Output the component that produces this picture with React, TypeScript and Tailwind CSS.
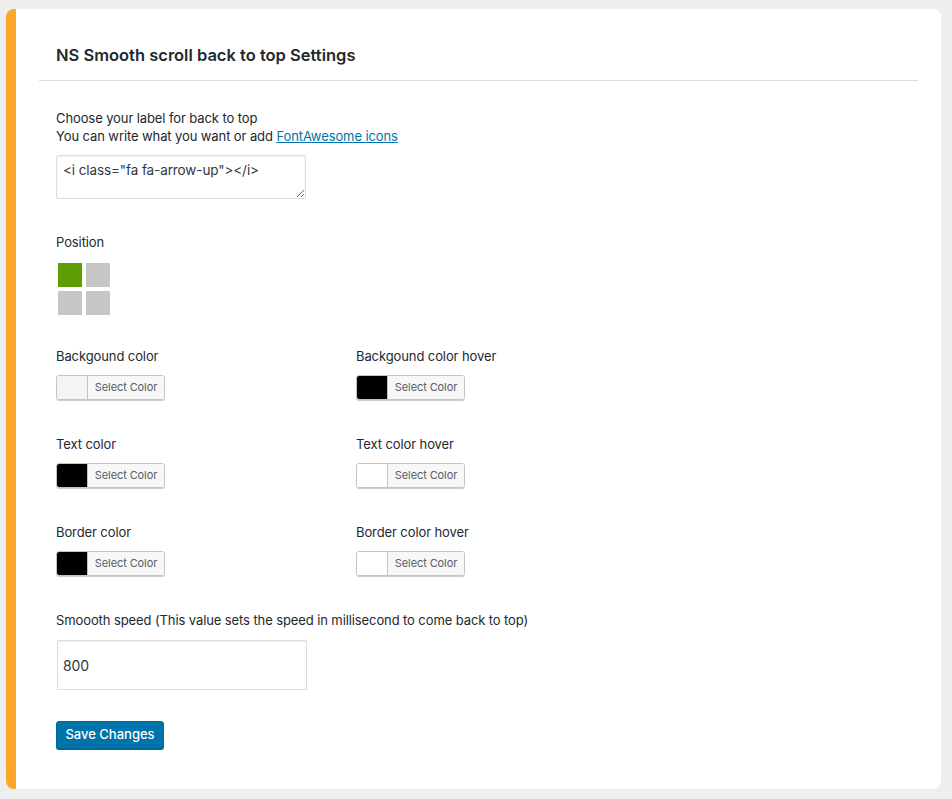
import React from "react";

const font = { fontFamily: "Inter, 'Noto Sans', sans-serif" };

const ColorPicker = ({ swatch }: { swatch: string }) => (
  <div className="flex h-[25px] w-[109px] overflow-hidden rounded-[3px] border border-[#c3c4c7] shadow-[0_1px_0_#ccc]">
    <span className={`w-[31px] border-r border-[#c3c4c7] ${swatch}`} />
    <span className="flex flex-1 items-center justify-center bg-[#f7f7f7] text-[11px] text-[#555d66]">
      Select Color
    </span>
  </div>
);

const Field = ({ label, swatch }: { label: string; swatch: string }) => (
  <div className="w-[300px]">
    <p className="leading-[18px]">{label}</p>
    <div className="mt-[10px]">
      <ColorPicker swatch={swatch} />
    </div>
  </div>
);

const App = () => {
  return (
    <div style={font} className="min-h-[799px] bg-[#eeeeee] pt-[9px] pl-[6px] pr-[11px] pb-[11px] text-[13px] tracking-[-0.1px] text-[#23282d]">
      <div className="rounded-lg border-l-[10px] border-[#fba72a] bg-white px-[23px] pb-[40px]">
        {/* Title */}
        <div className="border-b border-[#dcdcde] px-[17px] pt-[34px] pb-[13px]">
          <h1 className="text-[16.5px] font-semibold leading-6 tracking-normal text-[#23282d]">
            NS Smooth scroll back to top Settings
          </h1>
        </div>

        <div className="px-[17px] pt-[28px]">
          <p className="leading-[18px]">Choose your label for back to top</p>
          <p className="leading-[18px]">
            You can write what you want or add{" "}
            <a href="#" className="text-[#0073aa] underline">FontAwesome icons</a>
          </p>
          <textarea
            defaultValue={'<i class="fa fa-arrow-up"></i>'}
            className="mt-[10px] block h-[44px] w-[250px] rounded-[2px] border border-[#dddddd] px-[6px] py-[4px] text-[13.5px] leading-[20px] text-[#32373c] shadow-[inset_0_1px_2px_rgba(0,0,0,0.07)] outline-none"
          />

          <p className="mt-[34px] leading-[18px]">Position</p>
          <div className="mt-[12px] ml-[2px] grid w-[52px] grid-cols-2 gap-[4px]">
            <span className="h-[24px] w-[24px] bg-[#5d9e02]" />
            <span className="h-[24px] w-[24px] bg-[#c6c6c6]" />
            <span className="h-[24px] w-[24px] bg-[#c6c6c6]" />
            <span className="h-[24px] w-[24px] bg-[#c6c6c6]" />
          </div>

          <div className="mt-[32px] flex">
            <Field label="Backgound color" swatch="bg-[#f4f4f4]" />
            <Field label="Backgound color hover" swatch="bg-black" />
          </div>
          <div className="mt-[35px] flex">
            <Field label="Text color" swatch="bg-black" />
            <Field label="Text color hover" swatch="bg-white" />
          </div>
          <div className="mt-[35px] flex">
            <Field label="Border color" swatch="bg-black" />
            <Field label="Border color hover" swatch="bg-white" />
          </div>

          <p className="mt-[35px] leading-[18px]">
            Smoooth speed (This value sets the speed in millisecond to come back to top)
          </p>
          <input
            defaultValue="800"
            className="mt-[11px] ml-[1px] block h-[50px] w-[250px] border border-[#dddddd] px-[5px] text-[14px] text-[#32373c] shadow-[inset_0_1px_2px_rgba(0,0,0,0.07)] outline-none"
          />

          <button className="mt-[31px] h-[28px] w-[108px] rounded-[3px] border border-[#006799] bg-[#0073aa] text-[13px] font-medium tracking-normal text-white shadow-[0_1px_0_#006799]">
            Save Changes
          </button>
        </div>
      </div>
    </div>
  );
};

export default App;
